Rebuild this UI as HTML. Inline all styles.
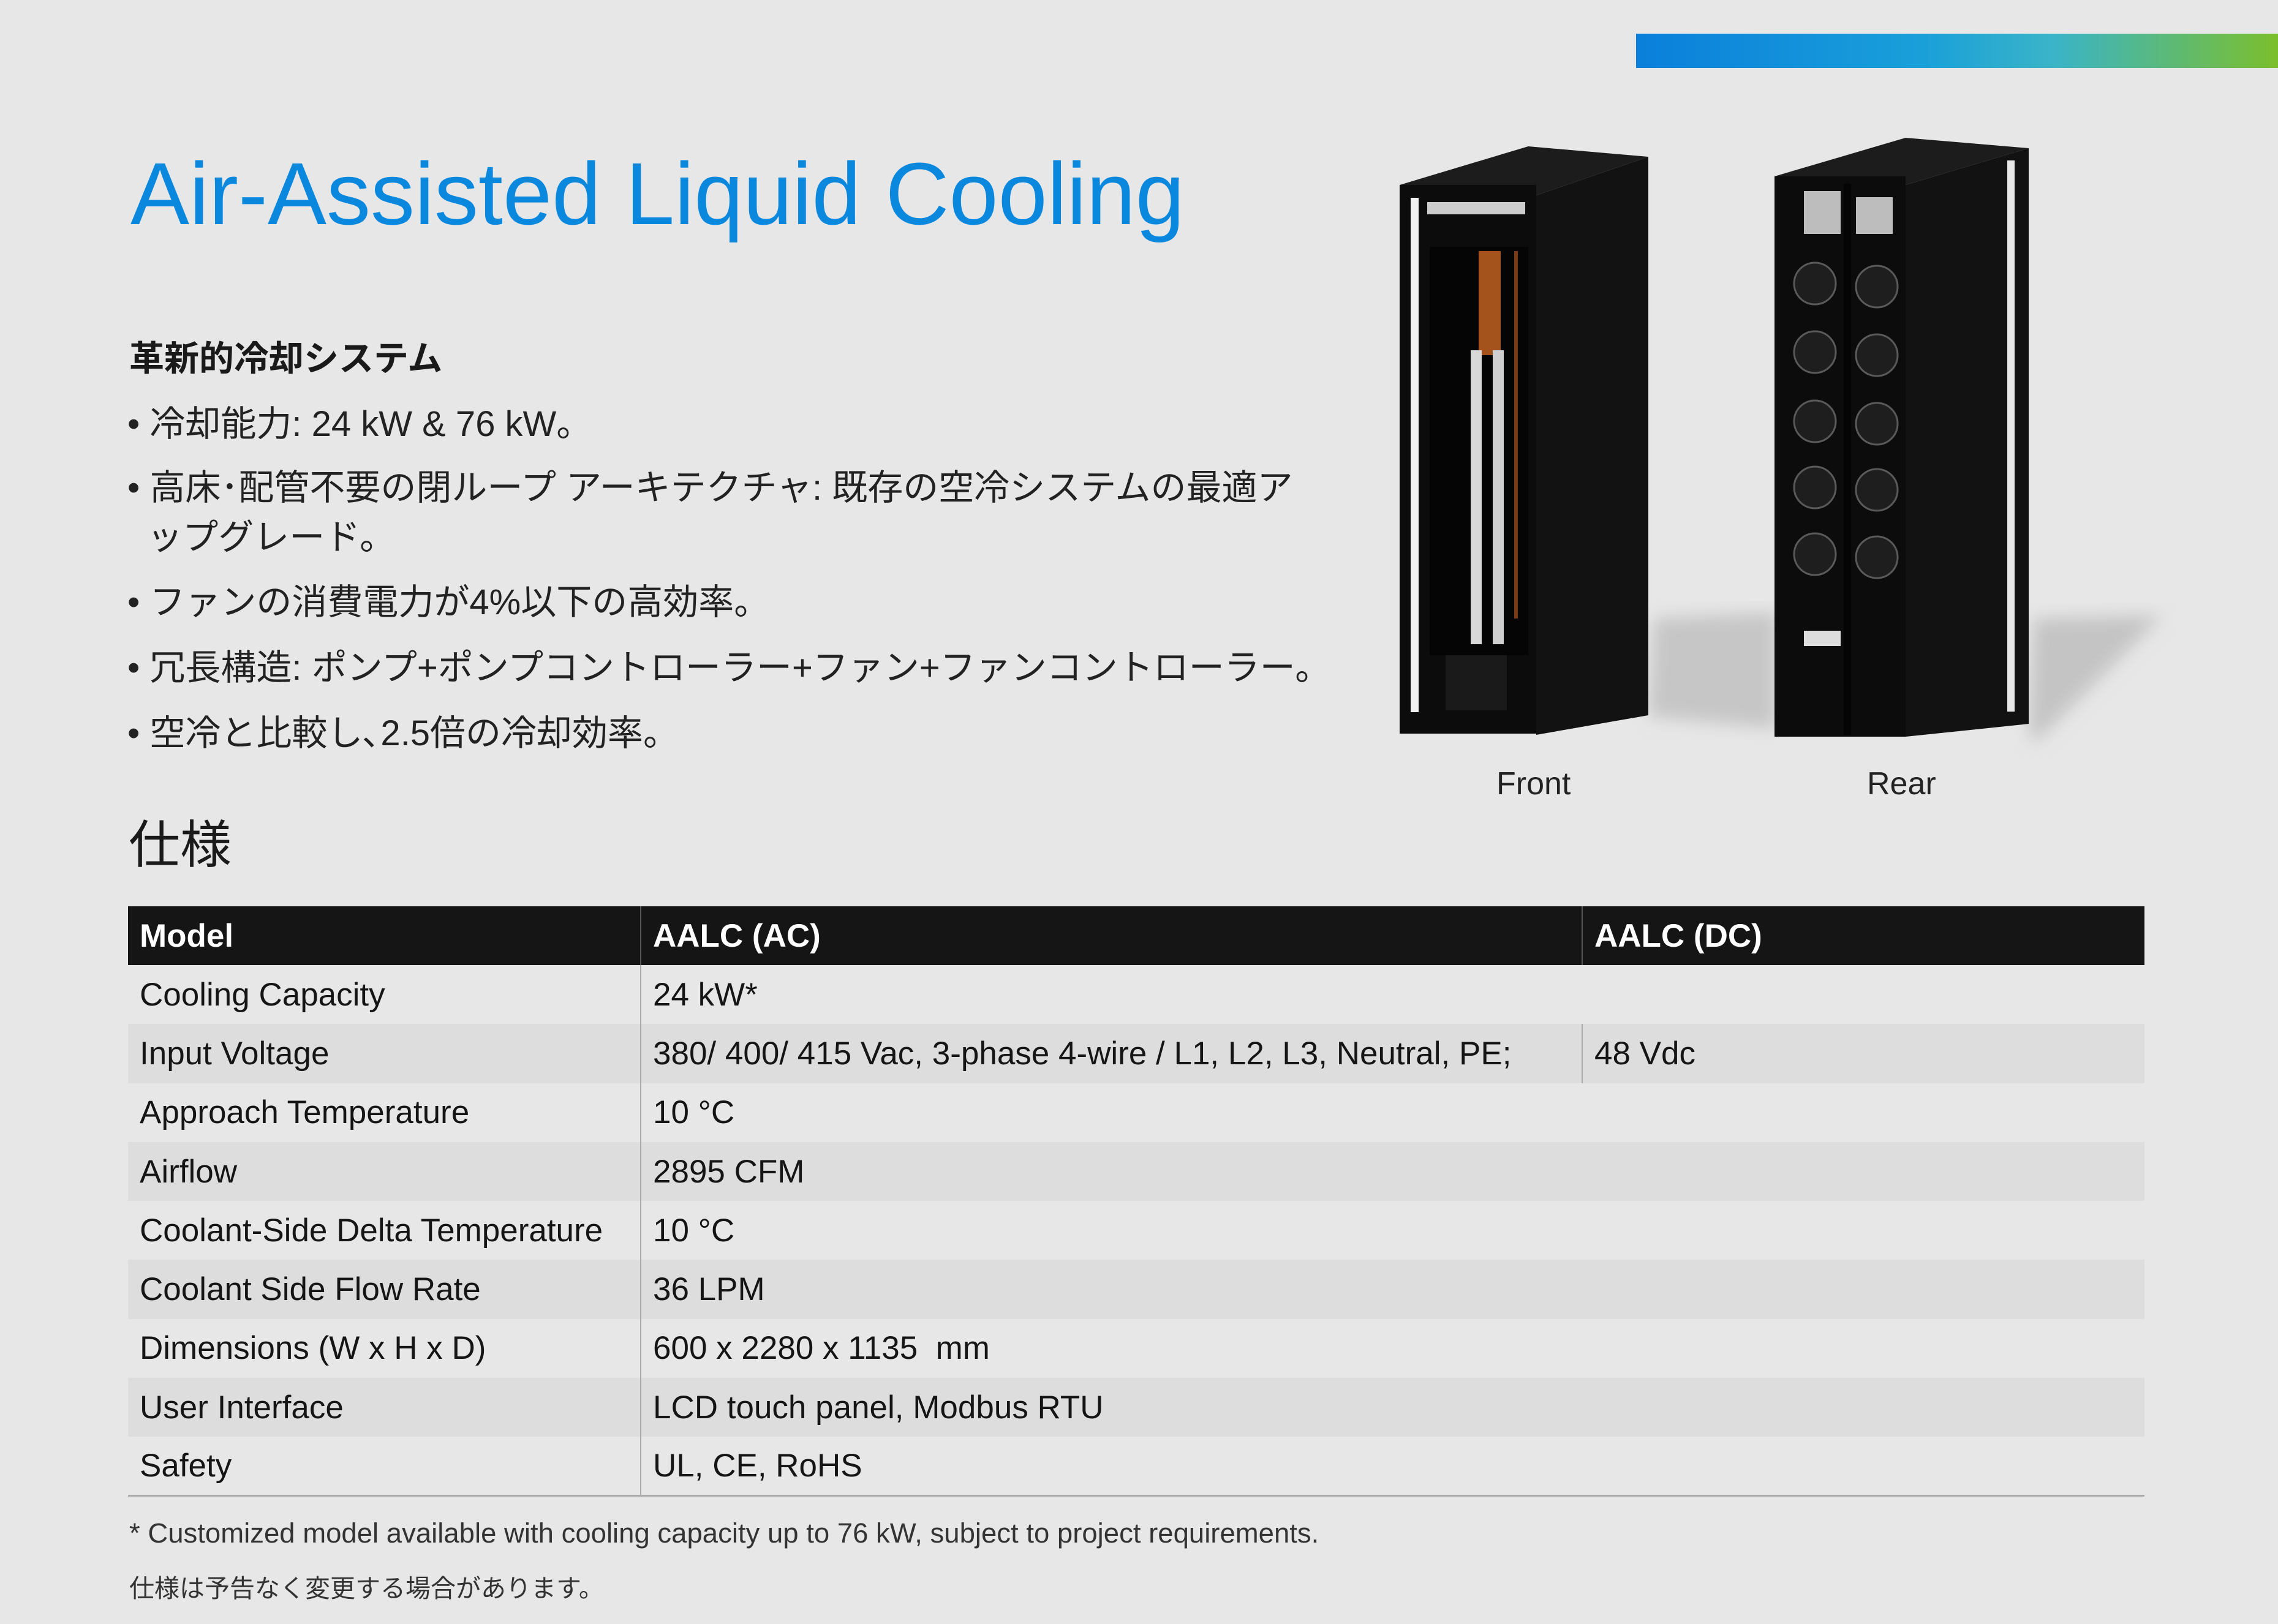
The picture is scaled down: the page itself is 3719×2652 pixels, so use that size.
<!DOCTYPE html>
<html><head><meta charset="utf-8">
<style>
*{margin:0;padding:0;box-sizing:border-box}
body{width:3719px;height:2652px;background:#e7e7e7;position:relative;overflow:hidden;font-family:"Liberation Sans","Noto Sans CJK JP",sans-serif;color:#1a1a1a}
.abs{position:absolute;white-space:nowrap}
.bar{left:2671px;top:55px;width:1048px;height:56px;background:linear-gradient(90deg,#0a7fdb 0%,#1aa0d9 45%,#3ab4c8 65%,#7cbf2c 100%)}
.title{left:213px;top:232px;font-size:144px;line-height:170px;color:#0a88dd}
.h3{left:211px;top:550px;font-size:57px;line-height:72px;font-weight:bold}
.bl{left:208px;font-size:58px;line-height:80px;color:#222}
.spec{left:210px;top:1330px;font-size:84px;line-height:100px}
table{position:absolute;left:209px;top:1480px;width:3292px;border-collapse:collapse;font-size:53px}
td{height:96.3px;padding:0 0 0 19px;vertical-align:middle;color:#151515}
tr.hd td{background:#151515;color:#fff;font-weight:bold;height:96px}
tr.g td{background:#dcdddc}
td.c1{width:837px;border-right:2px solid #aaa}
tr.hd td.c1{border-right:2px solid #555}
td.c2s{border-right:2px solid #aaa}
tr.hd td.c2s{border-right:2px solid #555}
tr.last td{border-bottom:3px solid #aaa}
.fn{left:211px;font-size:45.5px;color:#333}
.lab{font-size:52px;color:#222}
</style></head><body>
<div class="abs bar"></div>
<div class="abs title">Air-Assisted Liquid Cooling</div>
<div class="abs h3">革新的冷却システム</div>
<div class="abs bl" style="top:653px">• 冷却能力: 24 kW &amp; 76 kW。</div>
<div class="abs bl" style="top:757px">• 高床･配管不要の閉ループ アーキテクチャ: 既存の空冷システムの最適ア</div>
<div class="abs bl" style="top:838px">&nbsp;&nbsp;ップグレード。</div>
<div class="abs bl" style="top:944px">• ファンの消費電力が4%以下の高効率。</div>
<div class="abs bl" style="top:1051px">• 冗長構造: ポンプ+ポンプコントローラー+ファン+ファンコントローラー。</div>
<div class="abs bl" style="top:1158px">• 空冷と比較し､2.5倍の冷却効率。</div>
<div class="abs spec">仕様</div>

<svg class="abs" style="left:0;top:0" width="3719" height="1400" viewBox="0 0 3719 1400">
<defs><filter id="bl"><feGaussianBlur stdDeviation="14"/></filter></defs>
<polygon points="2691,1170 2700,1010 2900,1000 2900,1190" fill="#c6c6c6" filter="url(#bl)"/>
<polygon points="3312,1185 3320,1010 3530,1005 3320,1215" fill="#c4c4c4" filter="url(#bl)"/>
<!-- front cabinet -->
<polygon points="2285,302 2495,239 2691,256 2508,319" fill="#1c1c1c"/>
<polygon points="2508,319 2691,256 2691,1168 2508,1200" fill="#121212"/>
<rect x="2285" y="302" width="223" height="896" fill="#0c0c0c"/>
<rect x="2303" y="323" width="13" height="840" fill="#f2f2f2"/>
<rect x="2334" y="403" width="161" height="667" fill="#050505"/>
<rect x="2330" y="330" width="160" height="20" fill="#ccc"/>
<rect x="2414" y="410" width="36" height="170" fill="#a5531c"/>
<rect x="2472" y="410" width="6" height="600" fill="#7a3a15"/>
<rect x="2401" y="572" width="18" height="480" fill="#d8d8d8"/>
<rect x="2437" y="572" width="18" height="480" fill="#d0d0d0"/>
<rect x="2360" y="1070" width="100" height="90" fill="#1a1a1a"/>
<!-- rear cabinet -->
<polygon points="2897,288 3111,225 3312,242 3111,302" fill="#1c1c1c"/>
<polygon points="3111,302 3312,242 3312,1182 3111,1203" fill="#121212"/>
<rect x="2897" y="288" width="214" height="915" fill="#0c0c0c"/>
<rect x="3277" y="262" width="12" height="900" fill="#e8e8e8"/>
<rect x="2945" y="312" width="60" height="70" fill="#bdbdbd"/>
<rect x="3030" y="322" width="60" height="60" fill="#bdbdbd"/>
<rect x="2945" y="1030" width="60" height="25" fill="#ddd"/>
<g fill="#1e1e1e" stroke="#5a5a5a" stroke-width="3">
<circle cx="2963" cy="463" r="34"/><circle cx="3064" cy="468" r="34"/>
<circle cx="2963" cy="575" r="34"/><circle cx="3064" cy="580" r="34"/>
<circle cx="2963" cy="688" r="34"/><circle cx="3064" cy="692" r="34"/>
<circle cx="2963" cy="796" r="34"/><circle cx="3064" cy="800" r="34"/>
<circle cx="2963" cy="905" r="34"/><circle cx="3064" cy="910" r="34"/>
</g>
<rect x="3010" y="300" width="12" height="900" fill="#050505"/>
</svg>
<div class="abs lab" style="left:2443px;top:1250px">Front</div>
<div class="abs lab" style="left:3048px;top:1250px">Rear</div>

<table>
<tr class="hd"><td class="c1">Model</td><td class="c2s" style="width:1537px">AALC (AC)</td><td>AALC (DC)</td></tr>
<tr><td class="c1">Cooling Capacity</td><td colspan="2">24 kW*</td></tr>
<tr class="g"><td class="c1">Input Voltage</td><td class="c2s">380/ 400/ 415 Vac, 3-phase 4-wire / L1, L2, L3, Neutral, PE;</td><td>48 Vdc</td></tr>
<tr><td class="c1">Approach Temperature</td><td colspan="2">10 °C</td></tr>
<tr class="g"><td class="c1">Airflow</td><td colspan="2">2895 CFM</td></tr>
<tr><td class="c1">Coolant-Side Delta Temperature</td><td colspan="2">10 °C</td></tr>
<tr class="g"><td class="c1">Coolant Side Flow Rate</td><td colspan="2">36 LPM</td></tr>
<tr><td class="c1">Dimensions (W x H x D)</td><td colspan="2">600 x 2280 x 1135&nbsp; mm</td></tr>
<tr class="g"><td class="c1">User Interface</td><td colspan="2">LCD touch panel, Modbus RTU</td></tr>
<tr class="last"><td class="c1">Safety</td><td colspan="2">UL, CE, RoHS</td></tr>
</table>
<div class="abs fn" style="top:2478px">* Customized model available with cooling capacity up to 76 kW, subject to project requirements.</div>
<div class="abs fn" style="top:2560px;font-size:41px">仕様は予告なく変更する場合があります。</div>
</body></html>
